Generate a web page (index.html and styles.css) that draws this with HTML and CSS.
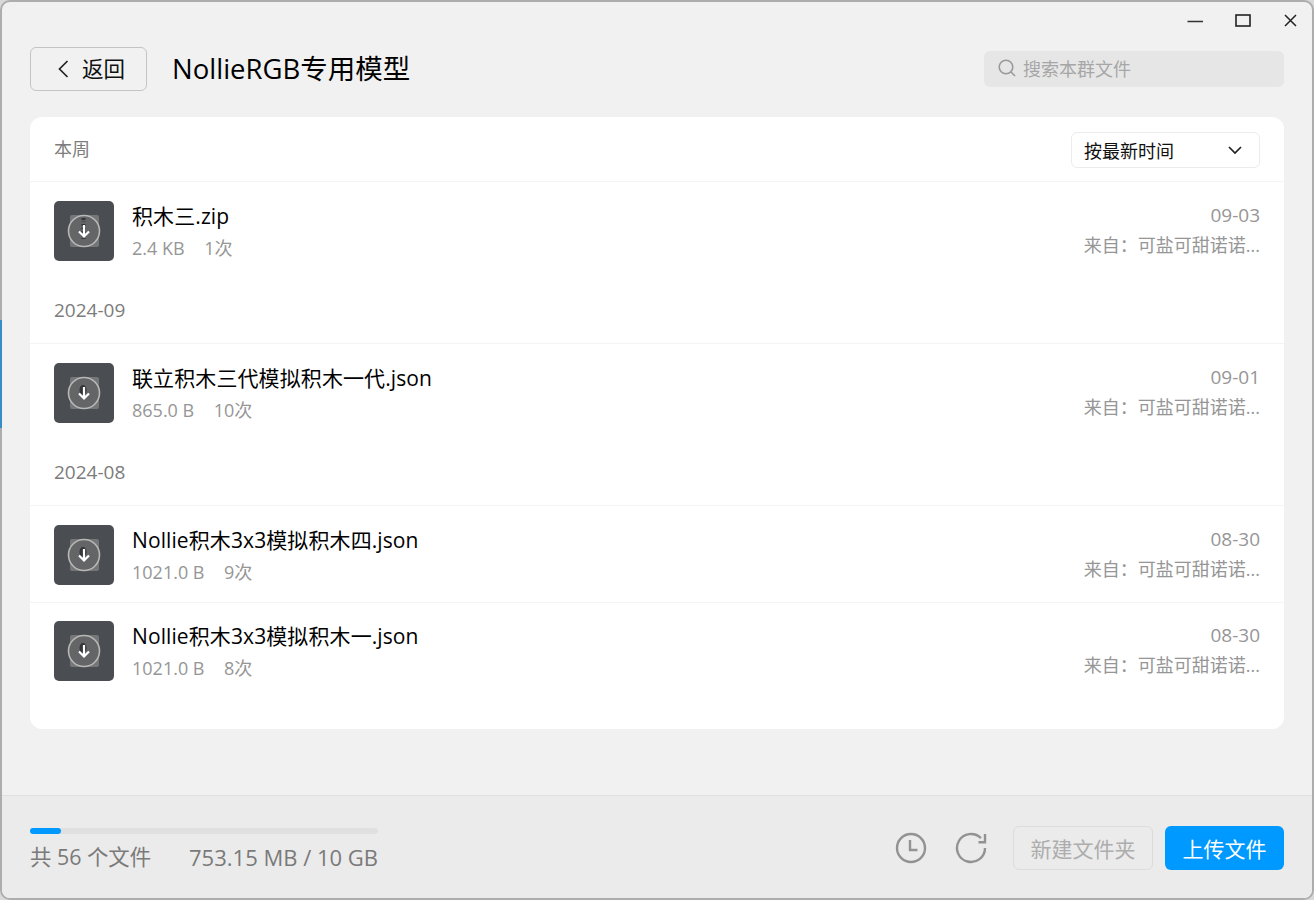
FILE: index.html
```html
<!DOCTYPE html>
<html lang="zh-CN">
<head>
<meta charset="utf-8">
<title>NollieRGB专用模型</title>
<link rel="stylesheet" href="styles.css">
</head>
<body>
<span class="behind"></span>
<div class="window">
  <div class="titlebar">
    <svg class="win-icon" width="20" height="20" viewBox="0 0 20 20"><path d="M2.5 10.5h15.5" stroke="#333" stroke-width="1.6" fill="none"/></svg>
    <svg class="win-icon" width="20" height="20" viewBox="0 0 20 20"><rect x="3" y="4" width="14" height="11" stroke="#222" stroke-width="1.6" fill="none"/></svg>
    <svg class="win-icon" width="20" height="20" viewBox="0 0 20 20"><path d="M4 4l11 11M15 4L4 15" stroke="#222" stroke-width="1.5" fill="none"/></svg>
  </div>
  <header class="header">
    <button class="back">
      <svg width="14" height="22" viewBox="0 0 14 22"><path d="M11.5 3L3.5 11l8 8" stroke="#222" stroke-width="1.7" fill="none"/></svg>
      <span class="back-text">返回</span>
    </button>
    <h1 class="title">NollieRGB专用模型</h1>
    <div class="search">
      <svg width="22" height="22" viewBox="0 0 22 22"><circle cx="10" cy="10" r="6.8" stroke="#999" stroke-width="1.6" fill="none"/><path d="M15 15l4 4" stroke="#999" stroke-width="1.6" fill="none"/></svg>
      <span>搜索本群文件</span>
    </div>
  </header>
  <main class="card">
    <div class="card-head">
      <span class="group-label">本周</span>
      <div class="select">
        <span>按最新时间</span>
        <svg width="16" height="10" viewBox="0 0 16 10"><path d="M2 2l6 6 6-6" stroke="#222" stroke-width="1.7" fill="none"/></svg>
      </div>
    </div>
    <div class="row">
      <svg class="file-icon" viewBox="0 0 60 60"><rect width="60" height="60" rx="5" fill="#4a4d51"/><rect x="16" y="14" width="29" height="32" rx="2" fill="#757678"/><circle cx="30" cy="30" r="15.5" fill="#646567" stroke="#b8b8b8" stroke-width="1.6"/><path d="M29.5 17v4M29.5 23v15" stroke="#333538" stroke-width="4" stroke-dasharray="2 1.5" fill="none"/><path d="M30 24v11M25 30.5l5 5 5-5" stroke="#fff" stroke-width="2.2" fill="none"/></svg>
      <div class="info"><div class="name">积木三.zip</div><div class="meta"><span>2.4 KB</span><span>1次</span></div></div>
      <div class="side"><div class="date">09-03</div><div class="from">来自&#xFF1A;可盐可甜诺诺...</div></div>
    </div>
    <div class="group">2024-09</div>
    <div class="row">
      <svg class="file-icon" viewBox="0 0 60 60"><rect width="60" height="60" rx="5" fill="#4a4d51"/><rect x="16" y="14" width="29" height="32" rx="2" fill="#757678"/><circle cx="30" cy="30" r="15.5" fill="#646567" stroke="#b8b8b8" stroke-width="1.6"/><ellipse cx="29" cy="27" rx="3.5" ry="5" fill="#333538"/><path d="M30 24v11M25 30.5l5 5 5-5" stroke="#fff" stroke-width="2.2" fill="none"/></svg>
      <div class="info"><div class="name">联立积木三代模拟积木一代.json</div><div class="meta"><span>865.0 B</span><span>10次</span></div></div>
      <div class="side"><div class="date">09-01</div><div class="from">来自&#xFF1A;可盐可甜诺诺...</div></div>
    </div>
    <div class="group">2024-08</div>
    <div class="row">
      <svg class="file-icon" viewBox="0 0 60 60"><rect width="60" height="60" rx="5" fill="#4a4d51"/><rect x="16" y="14" width="29" height="32" rx="2" fill="#757678"/><circle cx="30" cy="30" r="15.5" fill="#646567" stroke="#b8b8b8" stroke-width="1.6"/><ellipse cx="29" cy="27" rx="3.5" ry="5" fill="#333538"/><path d="M30 24v11M25 30.5l5 5 5-5" stroke="#fff" stroke-width="2.2" fill="none"/></svg>
      <div class="info"><div class="name">Nollie积木3x3模拟积木四.json</div><div class="meta"><span>1021.0 B</span><span>9次</span></div></div>
      <div class="side"><div class="date">08-30</div><div class="from">来自&#xFF1A;可盐可甜诺诺...</div></div>
    </div>
    <div class="row row-last">
      <svg class="file-icon" viewBox="0 0 60 60"><rect width="60" height="60" rx="5" fill="#4a4d51"/><rect x="16" y="14" width="29" height="32" rx="2" fill="#757678"/><circle cx="30" cy="30" r="15.5" fill="#646567" stroke="#b8b8b8" stroke-width="1.6"/><ellipse cx="29" cy="27" rx="3.5" ry="5" fill="#333538"/><path d="M30 24v11M25 30.5l5 5 5-5" stroke="#fff" stroke-width="2.2" fill="none"/></svg>
      <div class="info"><div class="name">Nollie积木3x3模拟积木一.json</div><div class="meta"><span>1021.0 B</span><span>8次</span></div></div>
      <div class="side"><div class="date">08-30</div><div class="from">来自&#xFF1A;可盐可甜诺诺...</div></div>
    </div>
  </main>
  <footer class="footer">
    <div class="storage">
      <div class="bar"><div class="bar-fill"></div></div>
      <div class="stats"><span class="count">共 56 个文件</span><span>753.15 MB / 10 GB</span></div>
    </div>
    <div class="actions">
      <svg class="tool clock" width="32" height="32" viewBox="0 0 32 32"><circle cx="16" cy="16" r="14" stroke="#929292" stroke-width="2.4" fill="none"/><path d="M15 8v10h7.5" stroke="#929292" stroke-width="2.4" fill="none"/></svg>
      <svg class="tool" width="32" height="32" viewBox="0 0 32 32"><path d="M25.9 6.1A14 14 0 1 0 30 16" stroke="#929292" stroke-width="2.4" fill="none"/><path d="M30 2v8.2H23.5" stroke="#929292" stroke-width="2.4" fill="none"/></svg>
      <button class="btn-folder">新建文件夹</button>
      <button class="btn-upload">上传文件</button>
    </div>
  </footer>
</div>
</body>
</html>
```
FILE: styles.css
```css
* { box-sizing: border-box; }
html, body { margin: 0; height: 100%; }
body {
  width: 1314px;
  height: 900px;
  overflow: hidden;
  background: #d9d9d9;
  font-family: "Open Sans", "Noto Sans CJK SC", sans-serif;
  position: relative;
}
.behind {
  position: absolute;
  left: 0;
  top: 320px;
  width: 2px;
  height: 108px;
  background: #3a8cc4;
  z-index: 2;
}
.window {
  width: 1314px;
  height: 900px;
  border: 2px solid #adadad;
  border-radius: 10px;
  background: #f1f1f1;
  display: flex;
  flex-direction: column;
  overflow: hidden;
}
.titlebar {
  height: 38px;
  display: flex;
  justify-content: flex-end;
  align-items: center;
  gap: 28px;
  padding: 0 11px 0 0;
  flex: none;
}
.win-icon { display: block; }
.header {
  height: 77px;
  flex: none;
  display: flex;
  align-items: flex-start;
  padding: 7px 28px 0;
}
.back {
  width: 117px;
  height: 44px;
  border: 1px solid #c4c4c4;
  border-radius: 6px;
  background: transparent;
  display: flex;
  align-items: center;
  gap: 12px;
  padding: 0 0 0 25px;
  font: inherit;
  font-size: 21.5px;
  color: #111;
}
.back-text { margin-top: -3px; }
.title {
  margin: 0 0 0 25px;
  font-size: 27.5px;
  font-weight: 400;
  line-height: 44px;
  color: #000;
  flex: 1;
}
.search {
  width: 300px;
  height: 36px;
  margin-top: 4px;
  border-radius: 6px;
  background: #e6e6e6;
  display: flex;
  align-items: center;
  gap: 5px;
  padding: 0 0 2px 12px;
  font-size: 18px;
  color: #a6a6a6;
}
.card {
  margin: 0 28px;
  height: 612px;
  flex: none;
  background: #fff;
  border-radius: 12px;
  padding-bottom: 32px;
}
.card-head {
  height: 64px;
  display: flex;
  justify-content: space-between;
  align-items: flex-start;
  padding: 15px 24px 0;
}
.group-label { font-size: 18px; line-height: 34px; color: #7c7c7c; }
.select {
  width: 189px;
  height: 36px;
  border: 1px solid #ececec;
  border-radius: 6px;
  display: flex;
  align-items: center;
  justify-content: space-between;
  padding: 0 16px 0 12px;
  font-size: 18px;
  color: #111;
}
.row {
  height: 96px;
  border-top: 1px solid #f4f4f4;
  padding: 19px 24px 0;
  display: flex;
  align-items: flex-start;
}
.row-last { margin-top: 1px; padding-top: 18px; height: 95px; }
.file-icon { width: 60px; height: 60px; flex: none; display: block; }
.info { margin-left: 18px; flex: 1; }
.name { font-size: 21px; letter-spacing: 0.1px; line-height: 28px; color: #000; margin-top: 1px; }
.meta {
  display: flex;
  gap: 19.5px;
  font-size: 18px;
  line-height: 26px;
  color: #969696;
  margin-top: 5px;
}
.side { text-align: right; color: #969696; font-size: 18px; }
.date { font-size: 19px; line-height: 26px; margin-top: 1px; }
.from { line-height: 26px; margin-top: 4px; }
.group {
  height: 66px;
  padding: 0 24px;
  display: flex;
  align-items: center;
  font-size: 19px;
  color: #7c7c7c;
}
.footer {
  margin-top: auto;
  height: 103px;
  flex: none;
  background: #ebebeb;
  border-top: 1px solid #e0e0e0;
  display: flex;
  justify-content: space-between;
  padding: 32px 28px 0;
}
.storage { width: 348px; }
.bar { height: 6px; border-radius: 3px; background: #e0e0e0; }
.bar-fill { width: 31px; height: 6px; border-radius: 3px; background: #0099ff; }
.stats {
  display: flex;
  justify-content: space-between;
  font-size: 22px;
  line-height: 28px;
  color: #7a7a7a;
  margin-top: 9px;
}
.count { font-size: 21.4px; }
.actions {
  display: flex;
  align-items: flex-start;
  margin-top: -2px;
}
.tool { margin-top: 6px; display: block; }
.clock { margin-right: 28px; }
.btn-folder {
  margin-left: 26px;
  width: 140px;
  height: 44px;
  border: 1px solid #dcdcdc;
  border-radius: 6px;
  background: transparent;
  font: inherit;
  font-size: 21px;
  color: #adadad;
  padding: 0;
}
.btn-upload {
  margin-left: 12px;
  width: 119px;
  height: 44px;
  border: 0;
  border-radius: 6px;
  background: #0099ff;
  font: inherit;
  font-size: 21px;
  color: #fff;
  padding: 0;
}
```
